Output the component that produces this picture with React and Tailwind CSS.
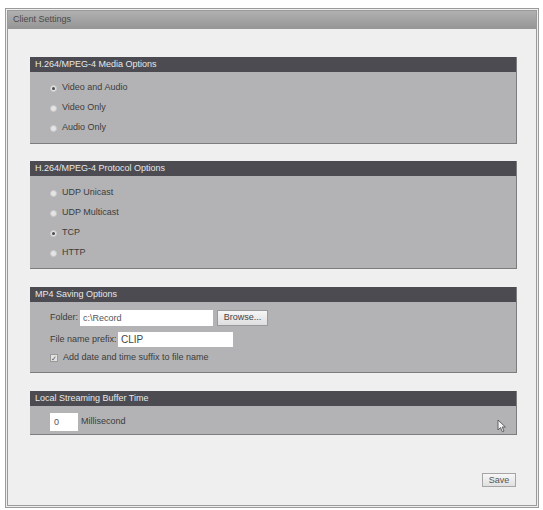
// App.jsx
const font = { fontFamily: '"Liberation Sans", Arial, sans-serif' };

const Radio = ({ label, checked }) => (
  <label className="flex h-5 items-center gap-[5px] pl-5 text-[9px] text-[#3c3c3c]">
    <span className="flex h-[7px] w-[7px] items-center justify-center rounded-full border border-[#c9c9c9] bg-[#e4e4e4]">
      {checked && <span className="h-[3px] w-[3px] rounded-full bg-[#4a4a4a]" />}
    </span>
    <span>{label}</span>
  </label>
);

const Panel = ({ title, children, bodyClass }) => (
  <section className="border-r border-b border-[#7d7d7d]">
    <div className="flex h-[15px] items-center bg-[#4b4b51] pl-[5px] text-[9px] text-[#e8e8e8]">
      {title}
    </div>
    <div className={`relative bg-[#b3b3b5] ${bodyClass}`}>{children}</div>
  </section>
);

const Cursor = () => (
  <svg className="absolute right-[10px] bottom-[1px]" width="9" height="14" viewBox="0 0 9 14">
    <path
      d="M1 1 L1 11 L3.5 8.6 L5.4 12.8 L7 12 L5.2 8 L8.4 8 Z"
      fill="#f4f4f4"
      stroke="#555"
      strokeWidth="0.9"
      strokeLinejoin="round"
    />
  </svg>
);

export default function App() {
  return (
    <div className="h-[510px] w-[543px] bg-white pt-2 pl-[5px]" style={font}>
      <div className="flex h-[500px] w-[534px] flex-col border-[3px] border-double border-[#9a9a9a] bg-[#efefef]">
        {/* window title */}
        <div className="flex h-[18px] items-center bg-gradient-to-b from-[#b0b0b0] to-[#959595] pl-[5px] text-[9px] text-[#4a4a4a]">
          Client Settings
        </div>

        <div className="flex flex-1 flex-col pt-[28px] pr-[19px] pl-[22px]">
          <Panel title="H.264/MPEG-4 Media Options" bodyClass="pt-[6px] pb-[5px]">
            <Radio label="Video and Audio" checked />
            <Radio label="Video Only" />
            <Radio label="Audio Only" />
          </Panel>

          <div className="h-[17px]" />

          <Panel title="H.264/MPEG-4 Protocol Options" bodyClass="pt-[7px] pb-[5px]">
            <Radio label="UDP Unicast" />
            <Radio label="UDP Multicast" />
            <Radio label="TCP" checked />
            <Radio label="HTTP" />
          </Panel>

          <div className="h-[18px]" />

          <Panel title="MP4 Saving Options" bodyClass="pt-[8px] pb-[8px] pl-5 text-[9px] text-[#3c3c3c]">
            <div className="flex h-4 items-center">
              <span className="w-[30px] whitespace-nowrap">Folder:</span>
              <input
                readOnly
                value="c:\Record"
                className="h-4 w-[133px] bg-white px-[3px] text-[9px] text-[#555] outline-none"
                style={font}
              />
              <button
                className="ml-1 h-4 w-[51px] border border-[#9a9a9a] bg-gradient-to-b from-[#f6f6f6] to-[#dedede] text-[9px] text-[#444]"
                style={font}
              >
                Browse...
              </button>
            </div>
            <div className="mt-[6px] flex h-[15px] items-center">
              <span className="w-[68px] whitespace-nowrap">File name prefix:</span>
              <input
                readOnly
                value="CLIP"
                className="h-[15px] w-[115px] bg-white px-[3px] text-[10px] text-[#444] outline-none"
                style={font}
              />
            </div>
            <div className="mt-[5px] flex h-[12px] items-center gap-[5px]">
              <span className="flex h-[8px] w-[8px] items-center justify-center border border-[#999] bg-[#e2e2e2] text-[7px] leading-none text-[#555]">
                ✓
              </span>
              <span>Add date and time suffix to file name</span>
            </div>
          </Panel>

          <div className="h-[18px]" />

          <Panel title="Local Streaming Buffer Time" bodyClass="pt-[7px] pb-[3px] pl-5 text-[9px] text-[#3c3c3c]">
            <div className="flex h-[18px] items-center gap-[3px]">
              <input
                readOnly
                value="0"
                className="h-[18px] w-[28px] bg-white px-[4px] text-[9px] text-[#555] outline-none"
                style={font}
              />
              <span>Millisecond</span>
            </div>
            <Cursor />
          </Panel>

          <div className="mt-[38px] flex justify-end pr-[1px]">
            <button
              className="h-[14px] w-[34px] border border-[#a5a5a5] bg-gradient-to-b from-[#f7f7f7] to-[#e0e0e0] text-[9px] text-[#555]"
              style={font}
            >
              Save
            </button>
          </div>
        </div>
      </div>
    </div>
  );
}
